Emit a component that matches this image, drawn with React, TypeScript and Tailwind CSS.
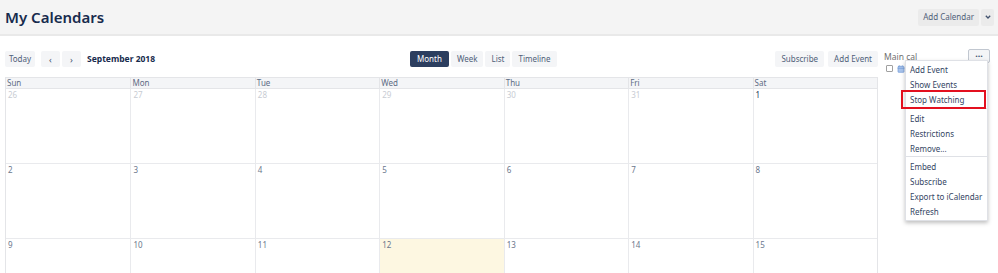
import { Calendar } from "lucide-react";

const weekdays = ["Sun", "Mon", "Tue", "Wed", "Thu", "Fri", "Sat"];

const weeks = [
  [26, 27, 28, 29, 30, 31, 1],
  [2, 3, 4, 5, 6, 7, 8],
  [9, 10, 11, 12, 13, 14, 15],
];

const menuGroups = [
  ["Add Event", "Show Events", "Stop Watching"],
  ["Edit", "Restrictions", "Remove..."],
  ["Embed", "Subscribe", "Export to iCalendar", "Refresh"],
];

function ToolButton({ label, active = false }: { label: string; active?: boolean }) {
  return (
    <button
      className={
        active
          ? "h-[16px] px-[7px] rounded-[2px] bg-[#2c3e5f] text-white text-[8px]"
          : "h-[16px] px-[6px] rounded-[2px] bg-[#f4f5f7] text-[#505f79] text-[8px]"
      }
    >
      {label}
    </button>
  );
}

export default function App() {
  return (
    <div className="relative w-[998px] h-[273px] overflow-hidden bg-white font-['Segoe_UI','Noto_Sans',sans-serif]">
      <header className="h-[36px] bg-[#f4f4f4] border-b-2 border-[#e9e9e9] flex items-center justify-between pl-[5px] pr-[4px]">
        <h1 className="text-[15px] font-semibold text-[#172b4d] leading-none">My Calendars</h1>
        <div className="flex gap-[2px]">
          <button className="h-[17px] px-[5px] bg-[#ebebeb] rounded-[2px] text-[8px] text-[#505f79]">
            Add Calendar
          </button>
          <button className="h-[17px] w-[13px] bg-[#ebebeb] rounded-[2px] flex items-center justify-center">
            <svg width="6" height="4" viewBox="0 0 6 4">
              <path d="M0.8 0.8 L3 3 L5.2 0.8" stroke="#42526e" strokeWidth="1.3" fill="none" />
            </svg>
          </button>
        </div>
      </header>

      <div className="flex">
        <main className="w-[873px] ml-[5px] mt-[15px]">
          <div className="flex items-center justify-between h-[16px]">
            <div className="flex items-center w-[300px]">
              <button className="h-[16px] w-[30px] rounded-[2px] bg-[#f4f5f7] text-[#505f79] text-[8px]">
                Today
              </button>
              <div className="flex gap-[2px] ml-[6px]">
                <button className="h-[16px] w-[19px] bg-[#f4f5f7] rounded-[2px] text-[9px] text-[#42526e] leading-none">‹</button>
                <button className="h-[16px] w-[19px] bg-[#f4f5f7] rounded-[2px] text-[9px] text-[#42526e] leading-none">›</button>
              </div>
              <span className="ml-[6px] text-[8.5px] font-bold text-[#172b4d]">September 2018</span>
            </div>
            <div className="flex gap-[2px] ml-[105px]">
              <ToolButton label="Month" active />
              <ToolButton label="Week" />
              <ToolButton label="List" />
              <ToolButton label="Timeline" />
            </div>
            <div className="flex gap-[4px] ml-auto">
              <ToolButton label="Subscribe" />
              <ToolButton label="Add Event" />
            </div>
          </div>

          <div className="mt-[10px] border border-[#e4e5e8]">
            <div className="grid grid-cols-7 bg-[#f4f5f7] border-b border-[#e4e5e8]">
              {weekdays.map((d, i) => (
                <div
                  key={d}
                  className={
                    "h-[10px] px-[1px] text-[8px] leading-[10px] text-[#5e6c84] " +
                    (i > 0 ? "border-l border-[#e4e5e8]" : "")
                  }
                >
                  {d}
                </div>
              ))}
            </div>
            {weeks.map((week, wi) => (
              <div key={wi} className="grid grid-cols-7 border-b border-[#e9eaed] h-[75px]">
                {week.map((n, di) => {
                  const other = wi === 0 && n > 7;
                  const today = wi === 2 && n === 12;
                  return (
                    <div
                      key={di}
                      className={
                        "px-[2px] pt-[1px] text-[8px] leading-[10px] " +
                        (di > 0 ? "border-l border-[#e9eaed] " : "") +
                        (today ? "bg-[#fdf7e1] " : "") +
                        (other ? "text-[#c8ccd3]" : n === 1 ? "text-[#253858]" : "text-[#6b778c]")
                      }
                    >
                      {n}
                    </div>
                  );
                })}
              </div>
            ))}
          </div>
        </main>

        <aside className="ml-[6px] mt-[13px] w-[109px]">
          <div className="flex items-start justify-between pr-[3px]">
            <span className="mt-[2px] text-[8.5px] text-[#707070]">Main cal</span>
            <button className="h-[14px] w-[22px] rounded-[2px] border border-[#c1c7d0] bg-[#f4f5f7] text-[9px] leading-[8px] font-bold text-[#42526e]">
              ···
            </button>
          </div>
          <div className="flex items-center gap-[4px] ml-[2px] mt-[1px]">
            <span className="w-[7px] h-[7px] border border-[#a0a0a0] rounded-[1px] bg-white" />
            <Calendar size={8} className="text-[#6f9ad6]" fill="#a9c4ec" strokeWidth={2} />
          </div>
        </aside>
      </div>

      <div className="absolute left-[905px] top-[60px] w-[83px] bg-white border border-[#dfe1e6] shadow-[0_2px_4px_rgba(0,0,0,0.25)] py-[1px]">
        {menuGroups.map((group, gi) => (
          <div key={gi} className={gi > 0 ? "border-t border-[#dfe1e6] pt-[2px]" : "pb-[1px]"}>
            {group.map((item) => (
              <div
                key={item}
                className={
                  "h-[15px] px-[4px] flex items-center text-[8px] text-[#344563] " +
                  (item === "Stop Watching" ? "relative" : "")
                }
              >
                {item}
                {item === "Stop Watching" && (
                  <span className="absolute left-[-5px] top-[-2px] w-[85px] h-[19px] border-2 border-[#e3101f]" />
                )}
              </div>
            ))}
          </div>
        ))}
      </div>
    </div>
  );
}
